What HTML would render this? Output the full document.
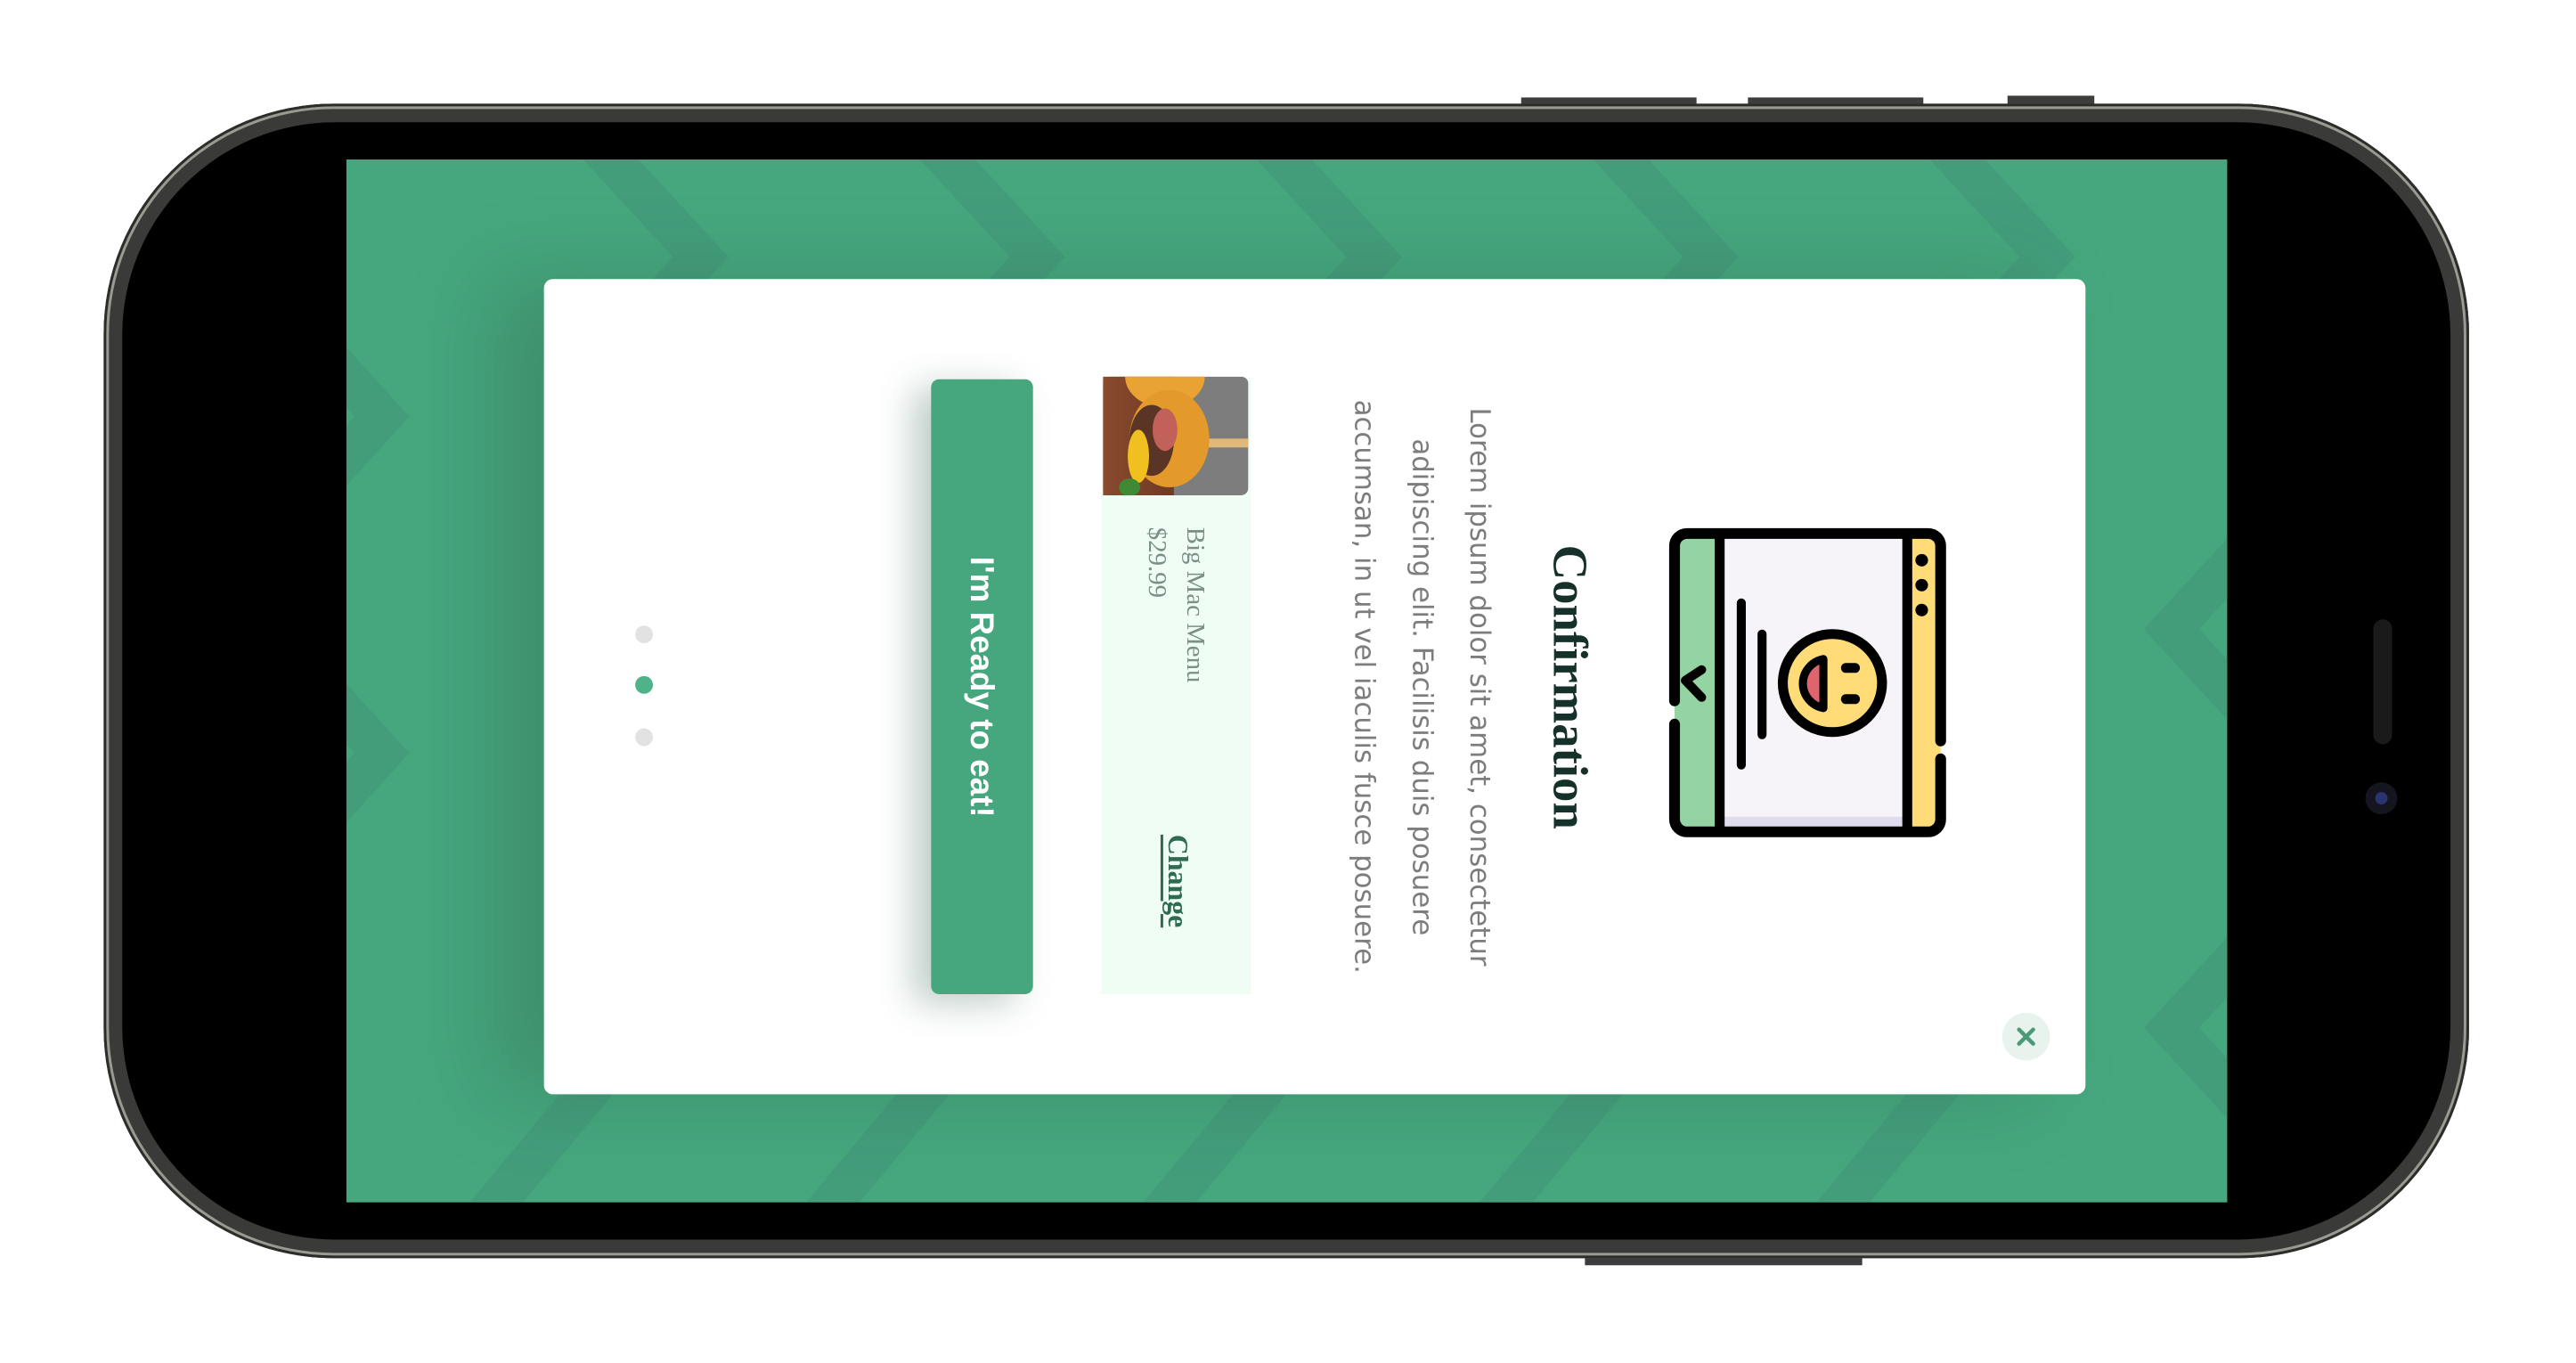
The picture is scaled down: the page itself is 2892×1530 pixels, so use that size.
<!DOCTYPE html>
<html><head><meta charset="utf-8"><style>
html,body{margin:0;padding:0;width:2892px;height:1530px;background:#fff;overflow:hidden;position:relative;font-family:"Liberation Sans",sans-serif}
#w{position:absolute;left:0;top:0;width:2892px;height:1530px;transform:scale(0.9946);transform-origin:0 0}
.abs{position:absolute}
.frame{left:117px;top:117px;width:2670px;height:1303px;border-radius:260px;background:#3a3a38;box-shadow:inset 0 0 0 3px #2c2c2a,inset 0 0 0 6px #9a9a92,inset 0 0 0 9px #3a3a38}
.inner{left:138px;top:138px;width:2628px;height:1261px;border-radius:240px;background:#000}
.btn{background:#3d3d3b;height:9px}
.screen{left:391px;top:180px;width:2123px;height:1177px;background:#46a77e;overflow:hidden}
.modal{left:614px;top:315px;width:1740px;height:920px;background:#fff;border-radius:10px;box-shadow:-60px 0 90px rgba(40,80,60,.25)}
.v{writing-mode:vertical-rl}
</style></head><body><div id="w">
<div class="abs btn" style="left:1717px;top:110px;width:198px"></div>
<div class="abs btn" style="left:1973px;top:110px;width:198px"></div>
<div class="abs btn" style="left:2266px;top:108px;width:98px;height:11px"></div>
<div class="abs btn" style="left:1789px;top:1418px;width:313px;height:10px"></div>
<div class="abs frame"></div>
<div class="abs inner"></div>
<div class="abs" style="left:2679px;top:699px;width:21px;height:141px;border-radius:11px;background:#1a1a1a"></div>
<div class="abs" style="left:2670px;top:883px;width:36px;height:36px;border-radius:50%;background:#151520"><div class="abs" style="left:11px;top:11px;width:14px;height:14px;border-radius:50%;background:#2b3470"></div></div>
<div class="abs screen">
<svg width="2123" height="1177" style="position:absolute;left:0;top:0">
<g fill="none" stroke="#42997a" stroke-width="46" stroke-opacity=".7">
<polyline points="280,-20 400,110 280,240"/><polyline points="660,-20 780,110 660,240"/><polyline points="1040,-20 1160,110 1040,240"/><polyline points="1420,-20 1540,110 1420,240"/><polyline points="1800,-20 1920,110 1800,240"/>
<polyline points="-60,180 40,290 -60,400"/><polyline points="-60,560 40,670 -60,780"/>
<polyline points="2180,400 2060,530 2180,660"/><polyline points="2180,850 2060,980 2180,1110"/>
<line x1="150" y1="1200" x2="300" y2="1020"/><line x1="530" y1="1200" x2="680" y2="1020"/><line x1="910" y1="1200" x2="1060" y2="1020"/><line x1="1290" y1="1200" x2="1440" y2="1020"/><line x1="1670" y1="1200" x2="1820" y2="1020"/>
</g></svg>
</div>
<div class="abs modal"></div>
<div class="abs" style="left:717px;top:706px;width:20px;height:20px;border-radius:50%;background:#e2e2e2"></div>
<div class="abs" style="left:717px;top:763px;width:20px;height:20px;border-radius:50%;background:#4fb389"></div>
<div class="abs" style="left:717px;top:822px;width:20px;height:20px;border-radius:50%;background:#e2e2e2"></div>
<div class="abs v" style="left:1051px;top:428px;width:115px;height:694px;background:#46a77e;border-radius:9px;box-shadow:-20px 10px 40px rgba(40,90,70,.3);color:#fff;font-weight:bold;font-size:37px;text-align:center;line-height:115px">I'm Ready to eat!</div>
<div class="abs" style="left:1243px;top:426px;width:169px;height:696px;background:#effdf4"></div>
<svg class="abs" style="left:1245px;top:425px" width="164" height="134">
<defs><linearGradient id="g" x1="0" x2="1"><stop offset="0" stop-color="#8a4a2e"/><stop offset="1" stop-color="#6e3a22"/></linearGradient></defs>
<rect width="164" height="134" rx="8" fill="#7d7d7d"/>
<rect width="80" height="134" fill="url(#g)"/>
<rect x="110" y="70" width="54" height="10" fill="#e0b87a"/>
<ellipse cx="70" cy="0" rx="45" ry="35" fill="#e9a332"/>
<ellipse cx="75" cy="70" rx="45" ry="55" fill="#e39a2a"/>
<ellipse cx="55" cy="72" rx="25" ry="40" fill="#5a3424"/>
<ellipse cx="70" cy="60" rx="14" ry="24" fill="#c2605a"/>
<ellipse cx="40" cy="90" rx="12" ry="30" fill="#f0c020"/>
<ellipse cx="30" cy="125" rx="12" ry="10" fill="#3f8a34"/>
</svg>
<div class="abs v" style="left:1282px;top:595px;width:88px;height:260px;font-family:'Liberation Serif',serif;font-size:29px;line-height:43px;color:#7a8f86">Big Mac Menu<br>$29.99</div>
<div class="abs v" style="left:1307px;top:942px;width:46px;height:130px;font-family:'Liberation Serif',serif;font-weight:bold;font-size:32px;line-height:46px;color:#2e6b52;text-decoration:underline">Change</div>
<div class="abs v" style="left:1508px;top:428px;width:194px;height:694px;font-family:'DejaVu Sans',sans-serif;font-size:31px;line-height:65px;color:#7d7d80;text-align:center;white-space:nowrap">Lorem ipsum dolor sit amet, consectetur<br>adipiscing elit. Facilisis duis posuere<br>accumsan, in ut vel iaculis fusce posuere.</div>
<div class="abs v" style="left:1738px;top:428px;width:68px;height:694px;font-family:'Liberation Serif',serif;font-weight:bold;font-size:55px;line-height:68px;color:#16302a;text-align:center">Confirmation</div>
<svg class="abs" style="left:1880px;top:590px" width="336" height="372" viewBox="0 0 330 370" preserveAspectRatio="none">
<rect x="10" y="12" width="295" height="335" rx="14" fill="#f6f4f9"/>
<rect x="10" y="12" width="50" height="335" fill="#94d3a2"/>
<rect x="270" y="12" width="35" height="335" fill="#ffdc78"/>
<rect x="62" y="330" width="206" height="14" fill="#e0dcef"/>
<path d="M10 200 V26 a14 14 0 0 1 14-14 H291 a14 14 0 0 1 14 14 V245 M305 265 V333 a14 14 0 0 1-14 14 H24 a14 14 0 0 1-14-14 V226" fill="none" stroke="#000" stroke-width="12" stroke-linecap="round"/>
<line x1="60" y1="14" x2="60" y2="345" stroke="#000" stroke-width="11"/>
<line x1="268" y1="14" x2="268" y2="345" stroke="#000" stroke-width="11"/>
<polyline points="40,165 22,177 40,196" fill="none" stroke="#000" stroke-width="10" stroke-linecap="round" stroke-linejoin="round"/>
<line x1="84" y1="90" x2="84" y2="272" stroke="#000" stroke-width="10" stroke-linecap="round"/>
<line x1="107" y1="125" x2="107" y2="238" stroke="#000" stroke-width="10" stroke-linecap="round"/>
<circle cx="185" cy="180" r="55" fill="#ffdc78" stroke="#000" stroke-width="11"/>
<path d="M175 153 A28 28 0 0 0 175 208 Z" fill="#e0646e" stroke="#000" stroke-width="9" stroke-linejoin="round"/>
<line x1="200" y1="163" x2="210" y2="163" stroke="#000" stroke-width="11" stroke-linecap="round"/>
<line x1="200" y1="198" x2="210" y2="198" stroke="#000" stroke-width="11" stroke-linecap="round"/>
<circle cx="284" cy="42" r="7"/><circle cx="284" cy="70" r="7"/><circle cx="284" cy="98" r="7"/>
</svg>
<div class="abs" style="left:2260px;top:1143px;width:54px;height:54px;border-radius:50%;background:#e8f3ee"></div>
<svg class="abs" style="left:2275px;top:1158px" width="24" height="24"><path d="M4 4 L20 20 M20 4 L4 20" stroke="#4a9a78" stroke-width="4.5" stroke-linecap="round"/></svg>
</div></body></html>
